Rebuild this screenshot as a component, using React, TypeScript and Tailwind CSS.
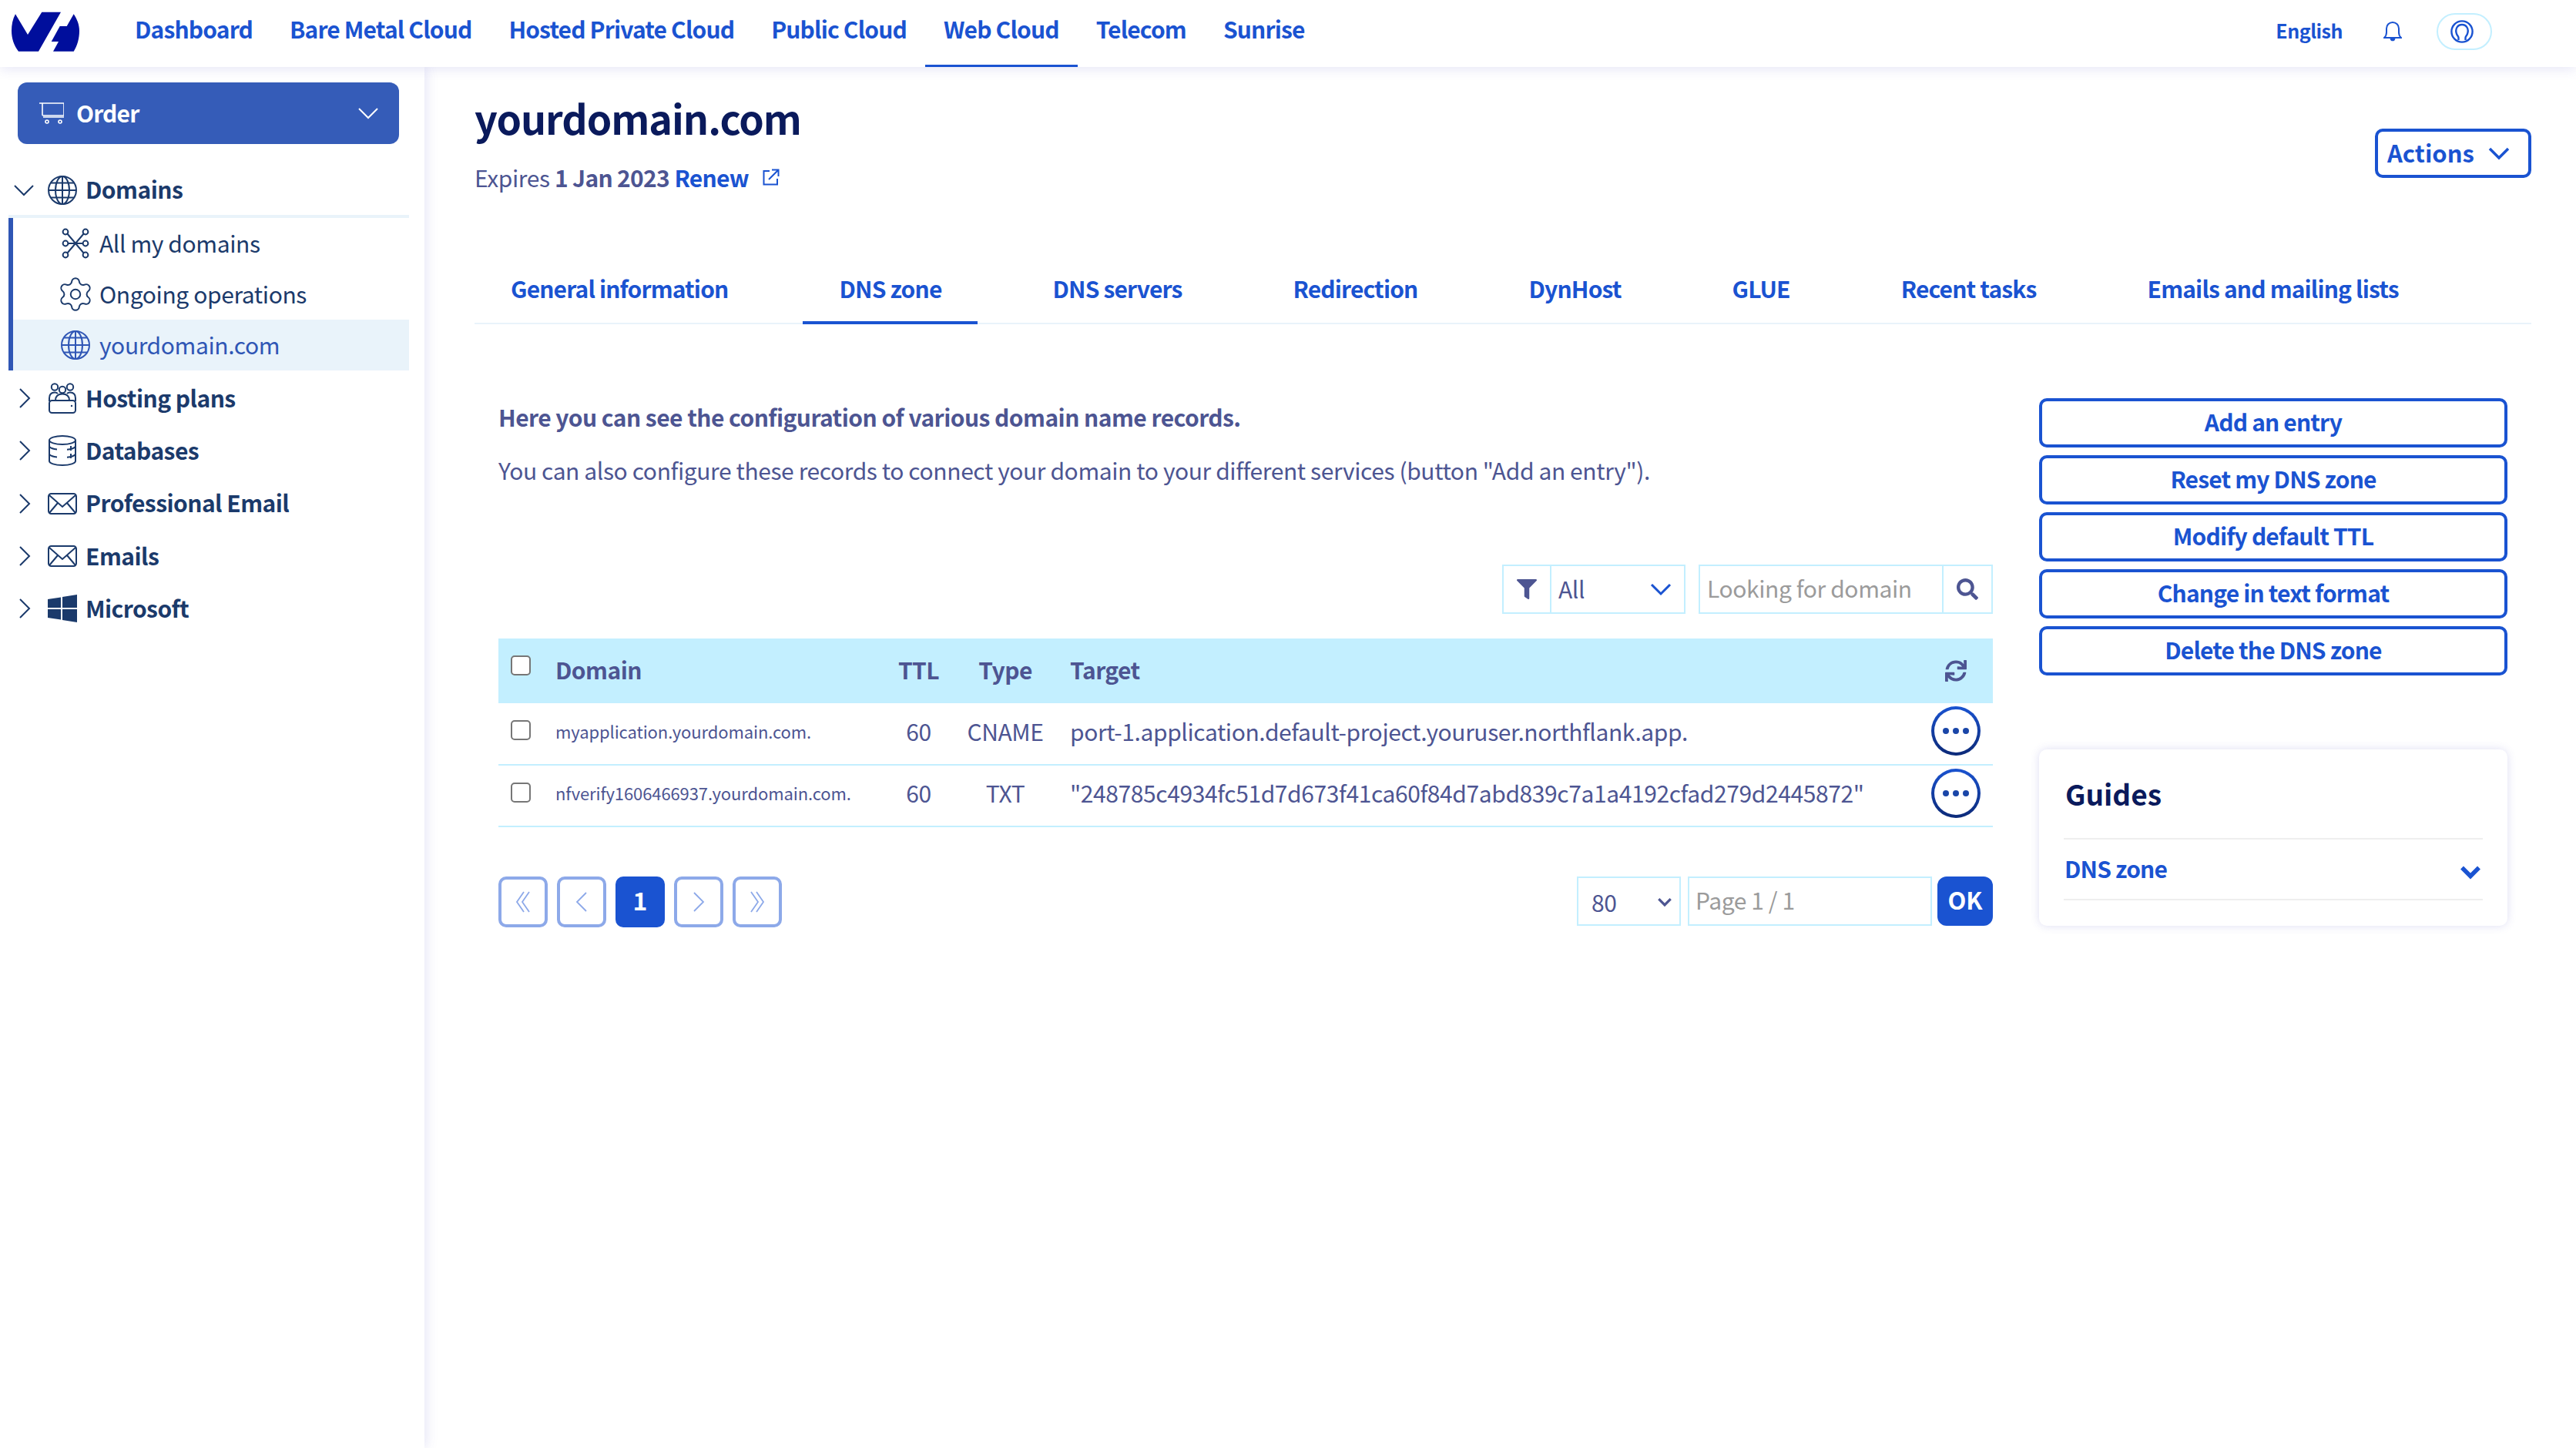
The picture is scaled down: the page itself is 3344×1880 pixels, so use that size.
import { ReactNode } from "react";
import { Settings } from "lucide-react";
import { FaFilter, FaSearch, FaSync } from "react-icons/fa";

const navItems = [
  "Dashboard",
  "Bare Metal Cloud",
  "Hosted Private Cloud",
  "Public Cloud",
  "Web Cloud",
  "Telecom",
  "Sunrise",
];

const tabs = [
  "General information",
  "DNS zone",
  "DNS servers",
  "Redirection",
  "DynHost",
  "GLUE",
  "Recent tasks",
  "Emails and mailing lists",
];

const sideActions = [
  "Add an entry",
  "Reset my DNS zone",
  "Modify default TTL",
  "Change in text format",
  "Delete the DNS zone",
];

const records = [
  {
    domain: "myapplication.yourdomain.com.",
    ttl: 60,
    type: "CNAME",
    target: "port-1.application.default-project.youruser.northflank.app.",
  },
  {
    domain: "nfverify1606466937.yourdomain.com.",
    ttl: 60,
    type: "TXT",
    target: '"248785c4934fc51d7d673f41ca60f84d7abd839c7a1a4192cfad279d2445872"',
  },
];

const linkText = "text-[30px] leading-[40px] font-bold tracking-[-0.85px]";
const boldText = "text-[30px] leading-[40px] font-bold tracking-[-0.55px]";
const bodyText = "text-[30px] leading-[40px] tracking-[-0.4px]";

function Logo() {
  return (
    <svg viewBox="15 15 88 52" className="h-[52px] w-[88px] shrink-0" fill="#000e9c">
      <path d="M20 18.3 C16.5 25 15 32 15 40 C15 50 18 59 24 66.7 L50 66.7 L79 15.7 L54.3 15.7 L36 45 Z" />
      <path d="M95.7 18.3 C100 25 103 32 103 40 C103 50 100.5 59 95.7 66.7 L69 66.7 L76 54 L66.7 54 L77.7 34 L86.7 34 Z" />
    </svg>
  );
}

function Chevron({ dir, className }: { dir: "up" | "down" | "left" | "right"; className: string }) {
  const points = {
    down: "2,6 14,18 26,6",
    up: "2,18 14,6 26,18",
    left: "18,2 6,14 18,26",
    right: "6,2 18,14 6,26",
  }[dir];
  return (
    <svg viewBox={dir === "left" || dir === "right" ? "0 0 24 28" : "0 0 28 24"} className={className} fill="none" stroke="currentColor" strokeLinejoin="miter">
      <polyline points={points} />
    </svg>
  );
}

function GlobeIcon({ className }: { className: string }) {
  return (
    <svg viewBox="0 0 38 40" className={className} fill="none" stroke="currentColor" strokeWidth="2">
      <circle cx="19" cy="20" r="18" />
      <ellipse cx="19" cy="20" rx="9" ry="18" />
      <path d="M19 2V38M1 20H37M4 10.5H34M4 29.5H34" />
    </svg>
  );
}

function NetworkIcon() {
  return (
    <svg viewBox="0 0 38 40" className="h-[40px] w-[38px]" fill="none" stroke="currentColor" strokeWidth="2">
      <path d="M8 7 L30 33 M30 7 L8 33 M8 20 H30" />
      <circle cx="6" cy="5" r="3.4" fill="white" />
      <circle cx="32" cy="5" r="3.4" fill="white" />
      <circle cx="6" cy="20" r="3.4" fill="white" />
      <circle cx="32" cy="20" r="3.4" fill="white" />
      <circle cx="6" cy="35" r="3.4" fill="white" />
      <circle cx="32" cy="35" r="3.4" fill="white" />
    </svg>
  );
}

function HostingIcon() {
  return (
    <svg viewBox="0 0 38 40" className="h-[40px] w-[38px]" fill="none" stroke="currentColor" strokeWidth="2">
      <circle cx="9" cy="5.5" r="4.2" />
      <circle cx="29" cy="5.5" r="4.2" />
      <circle cx="19" cy="9" r="4.2" />
      <path d="M2 24 V20 C2 15 5 12.5 9 12.5 C11 12.5 12 13 13 14 M36 24 V20 C36 15 33 12.5 29 12.5 C27 12.5 26 13 25 14 M10 23 C10 17 14 14.5 19 14.5 C24 14.5 28 17 28 23" />
      <rect x="2" y="23" width="34" height="16" rx="3.5" fill="white" />
      <circle cx="31" cy="30" r="1.2" fill="currentColor" stroke="none" />
    </svg>
  );
}

function DatabaseIcon() {
  return (
    <svg viewBox="0 0 38 40" className="h-[40px] w-[38px]" fill="none" stroke="currentColor" strokeWidth="2">
      <ellipse cx="19" cy="6.5" rx="17" ry="5.5" />
      <path d="M2 6.5 V33.5 C2 36.5 9 39 19 39 C29 39 36 36.5 36 33.5 V6.5" />
      <path d="M2 15 C4 17 7 18 12 18.5 M25 18.7 C30 18.3 34 17 36 15 M2 25 C4 27 7 28 12 28.5 M25 28.7 C30 28.3 34 27 36 25 M30 14 V20 M30 24 V30" />
    </svg>
  );
}

function MailIcon() {
  return (
    <svg viewBox="0 0 38 28" className="h-[28px] w-[38px]" fill="none" stroke="currentColor" strokeWidth="2">
      <rect x="1" y="1" width="36" height="26" rx="3.5" />
      <path d="M2 3 L19 18 L36 3 M2 26 L13 13 M36 26 L25 13" />
    </svg>
  );
}

function WindowsIcon() {
  return (
    <svg viewBox="0 0 38 36" className="h-[36px] w-[38px]" fill="currentColor">
      <path d="M0 6 L17 3.5 V17 H0 Z M19 3 L38 0 V17 H19 Z M0 19 H17 V32.5 L0 30 Z M19 19 H38 V36 L19 33 Z" />
    </svg>
  );
}

function CartIcon() {
  return (
    <svg viewBox="0 0 32 28" className="h-[28px] w-[32px]" fill="none" stroke="white" strokeWidth="1.6">
      <path d="M0 1 H32 V17 H5 Q4 17 4 16 V1 M5 19 H32" />
      <circle cx="10" cy="25" r="2" />
      <circle cx="27" cy="25" r="2" />
    </svg>
  );
}

function ExternalIcon() {
  return (
    <svg viewBox="0 0 22 22" className="h-[22px] w-[22px]" fill="none" stroke="currentColor" strokeWidth="2">
      <path d="M9 3 H1.5 V20.5 H19 V13 M12 1.5 H20.5 V10 M20.5 1.5 L8 14" />
    </svg>
  );
}

function BellIcon() {
  return (
    <svg viewBox="0 0 24 26" className="h-[26px] w-[24px]" fill="none" stroke="currentColor" strokeWidth="2">
      <path d="M1 21 H23 C20.5 19 20 17 20 14 V9 C20 4.5 16.5 1 12 1 C7.5 1 4 4.5 4 9 V14 C4 17 3.5 19 1 21 Z" />
      <path d="M9.5 22 C10 25 14 25 14.5 22" fill="currentColor" />
    </svg>
  );
}

function UserIcon() {
  return (
    <svg viewBox="0 0 30 30" className="h-[30px] w-[30px]" fill="none" stroke="currentColor" strokeWidth="2.4">
      <circle cx="15" cy="15" r="13.6" />
      <path d="M10.5 26 V23 C10.5 21 9 20.5 8.2 18.5 C7 15.5 7 12 8.5 9.5 C10 7 12.5 6 15 6 C17.5 6 20 7 21.5 9.5 C23 12 23 15.5 21.8 18.5 C21 20.5 19.5 21 19.5 23 V26" />
    </svg>
  );
}

function PageButton({ children, active }: { children: ReactNode; active?: boolean }) {
  if (active) {
    return (
      <button className="flex h-[66px] w-[64px] items-center justify-center rounded-[10px] bg-[#1a53d1] pb-[6px] text-[32px] leading-[40px] font-bold text-white">
        {children}
      </button>
    );
  }
  return (
    <button className="flex h-[66px] w-[64px] items-center justify-center rounded-[10px] border-[4px] border-[#8da9e9] text-[#8da9e9]">
      {children}
    </button>
  );
}

function DoubleChevron({ flip }: { flip?: boolean }) {
  return (
    <svg viewBox="0 0 20 28" className={flip ? "h-[28px] w-[20px] rotate-180" : "h-[28px] w-[20px]"} fill="none" stroke="currentColor" strokeWidth="1.8">
      <path d="M11 1 L2 14 L11 27 M18 1 L9 14 L18 27" />
    </svg>
  );
}

function MoreButton() {
  return (
    <button className="mx-auto mb-[7px] flex h-[64px] w-[64px] items-center justify-center rounded-full bg-gradient-to-b from-[#1a53d1] to-[#0c2a78] p-[4px]">
      <span className="flex h-full w-full items-center justify-center gap-[5px] rounded-full bg-white">
        <span className="h-[8px] w-[8px] rounded-full bg-[#1a46a8]" />
        <span className="h-[8px] w-[8px] rounded-full bg-[#1a46a8]" />
        <span className="h-[8px] w-[8px] rounded-full bg-[#1a46a8]" />
      </span>
    </button>
  );
}

function SideRow({ label, icon }: { label: string; icon: ReactNode }) {
  return (
    <div className="flex h-[68.3px] items-center text-[#1b3a6b]">
      <Chevron dir="right" className="ml-[9px] h-[28px] w-[24px] stroke-[2]" />
      <span className="ml-[18px] flex w-[38px] justify-center">{icon}</span>
      <span className={`ml-[11px] pb-[3px] ${boldText}`}>{label}</span>
    </div>
  );
}

function SubRow({ label, icon, active }: { label: string; icon: ReactNode; active?: boolean }) {
  return (
    <div className={active ? "flex h-[66px] items-center bg-[#e9f3fa] pl-[61px] text-[#2f56b5]" : "flex h-[66px] items-center pl-[61px] text-[#1b3a6b]"}>
      <span className="flex w-[40px] justify-center">{icon}</span>
      <span className={`ml-[11px] pb-[3px] ${bodyText}`}>{label}</span>
    </div>
  );
}

export default function App() {
  return (
    <div className="flex h-[1880px] w-[3344px] flex-col overflow-hidden bg-white font-['Noto_Sans_CJK_SC',sans-serif] text-[#4d5592]">
      {/* Top bar */}
      <header className="relative z-10 flex h-[87px] shrink-0 items-center bg-white pr-[109px] pb-[5px] pl-[15px] shadow-[0_3px_14px_rgba(70,70,190,0.13)]">
        <Logo />
        <nav className="ml-[48px] -mb-[5px] flex self-stretch">
          {navItems.map((item) => (
            <a
              key={item}
              className={
                item === "Web Cloud"
                  ? `flex items-center border-b-[3px] border-[#1a53d1] px-[24px] pb-[11px] text-[#1a53d1] ${linkText}`
                  : `flex items-center border-b-[3px] border-transparent px-[24px] pb-[11px] text-[#1a53d1] ${linkText}`
              }
            >
              {item}
            </a>
          ))}
        </nav>
        <div className="ml-auto flex items-center text-[#1a53d1]">
          <span className="pb-[4px] text-[25px] leading-[40px] font-bold tracking-[-0.5px]">English</span>
          <span className="ml-[53px]">
            <BellIcon />
          </span>
          <span className="ml-[45px] flex h-[48px] w-[72px] items-center justify-center rounded-[24px] border-[2px] border-[#c3efff] pr-[6px]">
            <UserIcon />
          </span>
        </div>
      </header>

      <div className="flex min-h-0 flex-1">
        {/* Sidebar */}
        <aside className="relative w-[551px] shrink-0 bg-white pt-[20px] pl-[11px] shadow-[3px_0_14px_rgba(70,70,190,0.13)]">
          <div className="w-[520px]">
            <button className="ml-[12px] flex h-[80px] w-[495px] items-center rounded-[12px] bg-[#355cb8] pr-[26px] pl-[28px] text-white">
              <CartIcon />
              <span className={`ml-[16px] pb-[3px] ${linkText}`}>Order</span>
              <Chevron dir="down" className="ml-auto h-[24px] w-[28px] stroke-[2]" />
            </button>

            <div className="mt-[27px] flex h-[65px] items-center text-[#1b3a6b]">
              <Chevron dir="down" className="ml-[6px] h-[24px] w-[28px] stroke-[2]" />
              <span className="ml-[17px]">
                <GlobeIcon className="h-[40px] w-[38px]" />
              </span>
              <span className={`ml-[11px] pb-[3px] ${boldText}`}>Domains</span>
            </div>
            <div className="h-[4px] bg-[#e9f3fa]" />
            <div className="border-l-[6px] border-[#2f56b5]">
              <SubRow label="All my domains" icon={<NetworkIcon />} />
              <SubRow label="Ongoing operations" icon={<Settings size={50} strokeWidth={0.95} className="shrink-0" />} />
              <SubRow label="yourdomain.com" icon={<GlobeIcon className="h-[40px] w-[38px]" />} active />
            </div>

            <div className="mt-[2px]">
              <SideRow label="Hosting plans" icon={<HostingIcon />} />
              <SideRow label="Databases" icon={<DatabaseIcon />} />
              <SideRow label="Professional Email" icon={<MailIcon />} />
              <SideRow label="Emails" icon={<MailIcon />} />
              <SideRow label="Microsoft" icon={<WindowsIcon />} />
            </div>
          </div>
        </aside>

        {/* Main */}
        <main className="min-w-0 flex-1 pt-[36px] pr-[58px] pl-[65px]">
          <div className="flex items-start justify-between">
            <div>
              <h1 className="pb-[4px] text-[52px] leading-[60px] font-bold tracking-[-1px] text-[#0a1a5c]">yourdomain.com</h1>
              <p className={`mt-[23px] flex items-center ${bodyText}`}>
                Expires&nbsp;<b className="font-bold tracking-[-0.7px]">1 Jan 2023</b>&nbsp;
                <a className="font-bold tracking-[-0.7px] text-[#1a53d1]">Renew</a>
                <span className="ml-[18px] text-[#1a53d1]">
                  <ExternalIcon />
                </span>
              </p>
            </div>
            <button className="mt-[44px] flex h-[64px] w-[203px] items-center rounded-[10px] border-[4px] border-[#1a53d1] pr-[24px] pl-[12px] text-[#1a53d1]">
              <span className="pb-[3px] text-[31px] leading-[40px] font-bold">Actions</span>
              <Chevron dir="down" className="ml-auto h-[24px] w-[28px] stroke-[3.5]" />
            </button>
          </div>

          {/* Tabs */}
          <div className="mt-[99px] flex h-[72px] gap-[50px] border-b-[2px] border-[#e9f3fa]">
            {tabs.map((tab) => (
              <a
                key={tab}
                className={
                  tab === "DNS zone"
                    ? `-mb-[2px] flex h-[72px] items-center border-b-[4px] border-[#1a53d1] px-[47px] pb-[18px] whitespace-nowrap text-[#1a53d1] ${linkText}`
                    : `-mb-[2px] flex h-[72px] items-center border-b-[4px] border-transparent px-[47px] pb-[18px] whitespace-nowrap text-[#1a53d1] ${linkText}`
                }
              >
                {tab}
              </a>
            ))}
          </div>

          <div className="flex gap-[60px] px-[31px] pt-[96px]">
            <section className="w-[1940px] shrink-0 pt-[4px]">
              <p className={boldText}>Here you can see the configuration of various domain name records.</p>
              <p className={`mt-[29px] ${bodyText}`}>
                You can also configure these records to connect your domain to your different services (button "Add an
                entry").
              </p>

              {/* Filters */}
              <div className="mt-[103px] flex justify-end gap-[17px]">
                <div className="flex h-[64px]">
                  <span className="flex w-[64px] items-center justify-center border-[2px] border-[#c3efff]">
                    <FaFilter size={26} />
                  </span>
                  <span className="-ml-[2px] flex w-[176px] items-center border-[2px] border-[#c3efff] pr-[16px] pl-[9px]">
                    <span className={`pb-[3px] ${bodyText}`}>All</span>
                    <Chevron dir="down" className="ml-auto h-[24px] w-[28px] stroke-[3] text-[#1a53d1]" />
                  </span>
                </div>
                <div className="flex h-[64px] w-[382px]">
                  <input
                    placeholder="Looking for domain"
                    className={`h-full min-w-0 flex-1 border-[2px] border-[#c3efff] px-[9px] pb-[4px] outline-none placeholder:text-[#9b9b9b] ${bodyText}`}
                  />
                  <span className="-ml-[2px] flex w-[66px] items-center justify-center border-[2px] border-[#c3efff]">
                    <FaSearch size={28} />
                  </span>
                </div>
              </div>

              {/* Records */}
              <table className="mt-[32px] w-full table-fixed border-collapse">
                <colgroup>
                  <col className="w-[74px]" />
                  <col className="w-[429px]" />
                  <col className="w-[85px]" />
                  <col className="w-[140px]" />
                  <col />
                  <col className="w-[95px]" />
                </colgroup>
                <thead>
                  <tr className="h-[84px] bg-[#c3efff]">
                    <th className="pl-[16px] text-left align-middle">
                      <input type="checkbox" className="mb-[14px] block h-[26px] w-[26px] appearance-none rounded-[5px] border-[2px] border-[#767676] bg-white" />
                    </th>
                    <th className={`pb-[4px] text-left ${boldText}`}>Domain</th>
                    <th className={`pb-[4px] text-center ${boldText}`}>TTL</th>
                    <th className={`pb-[4px] text-center ${boldText}`}>Type</th>
                    <th className={`pb-[4px] pl-[14px] text-left ${boldText}`}>Target</th>
                    <th>
                      <span className="flex justify-center pr-[2px]">
                        <FaSync size={28} />
                      </span>
                    </th>
                  </tr>
                </thead>
                <tbody>
                  {records.map((record) => (
                    <tr key={record.domain} className="h-[80px] border-b-[2px] border-[#c3efff]">
                      <td className="pl-[16px]">
                        <input type="checkbox" className="mb-[9px] block h-[26px] w-[26px] appearance-none rounded-[5px] border-[2px] border-[#767676] bg-white" />
                      </td>
                      <td className="pb-[8px] text-[22px] leading-[32px] tracking-[-0.1px] whitespace-nowrap">{record.domain}</td>
                      <td className={`pb-[8px] text-center ${bodyText}`}>{record.ttl}</td>
                      <td className={`pb-[8px] text-center ${bodyText}`}>{record.type}</td>
                      <td className={`pb-[8px] pl-[14px] whitespace-nowrap ${bodyText}`}>{record.target}</td>
                      <td className="pr-[2px]">
                        <MoreButton />
                      </td>
                    </tr>
                  ))}
                </tbody>
              </table>

              {/* Pagination */}
              <div className="mt-[64px] flex items-start justify-between">
                <div className="flex gap-[12px]">
                  <PageButton>
                    <DoubleChevron />
                  </PageButton>
                  <PageButton>
                    <Chevron dir="left" className="h-[28px] w-[24px] stroke-[1.8]" />
                  </PageButton>
                  <PageButton active>1</PageButton>
                  <PageButton>
                    <Chevron dir="right" className="h-[28px] w-[24px] stroke-[1.8]" />
                  </PageButton>
                  <PageButton>
                    <DoubleChevron flip />
                  </PageButton>
                </div>
                <div className="flex h-[64px]">
                  <span className="flex w-[135px] items-center border-[2px] border-[#c3efff] pt-[2px] pr-[10px] pl-[17px]">
                    <span className={bodyText}>80</span>
                    <Chevron dir="down" className="ml-auto h-[16px] w-[18px] stroke-[5]" />
                  </span>
                  <input
                    placeholder="Page 1 / 1"
                    className={`ml-[9px] h-full w-[317px] border-[2px] border-[#c3efff] px-[8px] pb-[4px] outline-none placeholder:text-[#9b9b9b] ${bodyText}`}
                  />
                  <button className="ml-[7px] h-full w-[72px] rounded-[12px] bg-[#1a53d1] pb-[4px] text-[31px] leading-[40px] font-bold text-white">
                    OK
                  </button>
                </div>
              </div>
            </section>

            {/* Right column */}
            <section className="w-[608px] shrink-0">
              <div className="flex flex-col gap-[10px]">
                {sideActions.map((action) => (
                  <button
                    key={action}
                    className={`h-[64px] rounded-[10px] border-[4px] border-[#1a53d1] pb-[4px] text-[#1a53d1] ${linkText}`}
                  >
                    {action}
                  </button>
                ))}
              </div>
              <div className="mt-[96px] rounded-[10px] bg-white px-[32px] pt-[30px] pb-[33px] shadow-[0_0_12px_rgba(70,70,190,0.18)]">
                <h2 className="pb-[2px] pl-[2px] text-[37px] leading-[54px] font-bold text-[#0a1a5c]">Guides</h2>
                <div className="mt-[29px] flex h-[81px] items-center justify-between border-y-[2px] border-[#eeeeee] pr-[2px] pl-[1px] text-[#1a53d1]">
                  <span className={`pb-[4px] ${linkText}`}>DNS zone</span>
                  <Chevron dir="down" className="mt-[6px] h-[22px] w-[28px] stroke-[6]" />
                </div>
              </div>
            </section>
          </div>
        </main>
      </div>
    </div>
  );
}
